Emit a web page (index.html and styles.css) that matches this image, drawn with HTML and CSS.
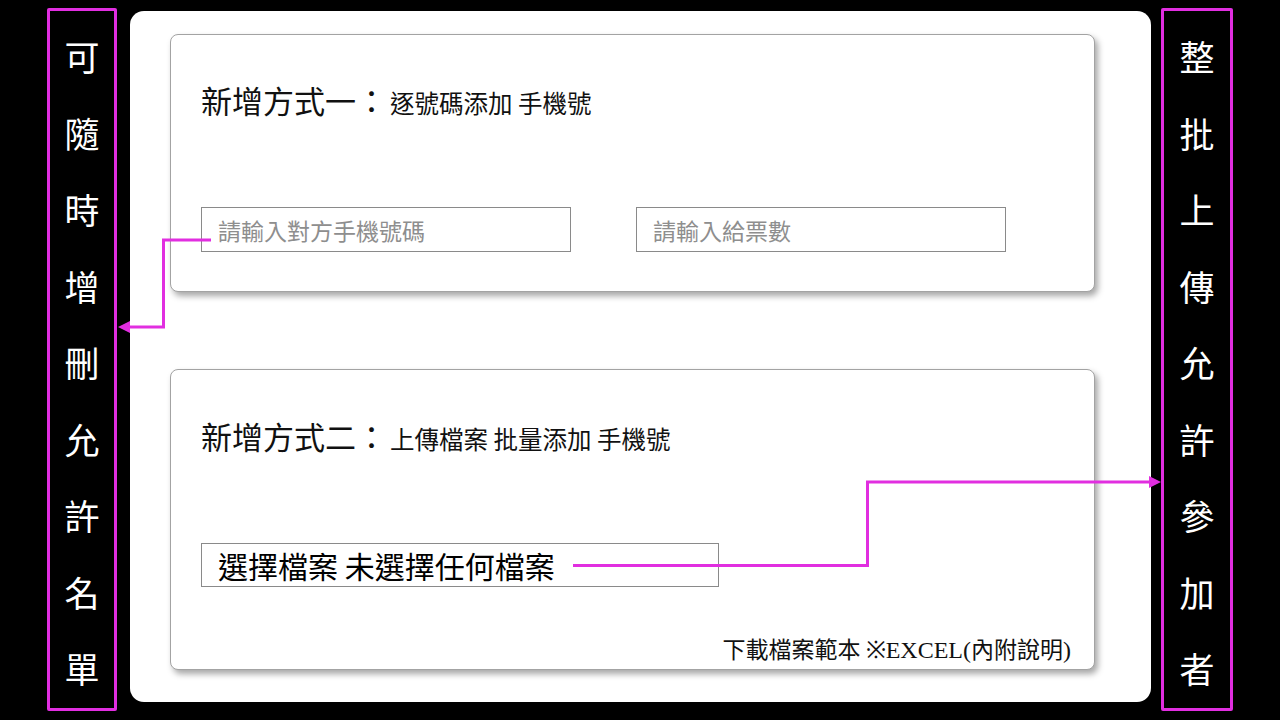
FILE: index.html
```html
<!DOCTYPE html>
<html lang="zh-Hant">
<head>
<meta charset="utf-8">
<title>新增方式</title>
<link rel="stylesheet" href="styles.css">
</head>
<body>
<div class="page">
  <div class="side">
    <span>可</span><span>隨</span><span>時</span><span>增</span><span>刪</span><span>允</span><span>許</span><span>名</span><span>單</span>
  </div>
  <div class="panel">
    <div class="card card-one">
      <div class="title"><span class="big">新增方式一：</span><span class="small">逐號碼添加 手機號</span></div>
      <div class="inputs">
        <div class="field">請輸入對方手機號碼</div>
        <div class="field">請輸入給票數</div>
      </div>
    </div>
    <div class="card card-two">
      <div class="title"><span class="big">新增方式二：</span><span class="small">上傳檔案 批量添加 手機號</span></div>
      <div class="file">選擇檔案 未選擇任何檔案</div>
      <div class="download">下載檔案範本 <span class="serif">※EXCEL(</span>內附說明<span class="serif">)</span></div>
    </div>
  </div>
  <div class="side">
    <span>整</span><span>批</span><span>上</span><span>傳</span><span>允</span><span>許</span><span>參</span><span>加</span><span>者</span>
  </div>
  <svg class="arrows" width="1280" height="720" viewBox="0 0 1280 720">
    <polyline points="211,240 163.5,240 163.5,327 128,327" fill="none" stroke="#e12ee0" stroke-width="3"/>
    <polygon points="118,327 130,321 130,333" fill="#e12ee0"/>
    <polyline points="573,565.5 867.5,565.5 867.5,482 1150,482" fill="none" stroke="#e12ee0" stroke-width="3"/>
    <polygon points="1161,482 1149,476 1149,488" fill="#e12ee0"/>
  </svg>
</div>
</body>
</html>
```

FILE: styles.css
```css
html, body {
  margin: 0;
  padding: 0;
  background: #000;
}
body {
  font-family: "Noto Sans CJK TC", "Noto Sans", sans-serif;
}
.page {
  position: relative;
  width: 1280px;
  height: 720px;
  display: flex;
  align-items: flex-start;
  padding: 8px 0 0 47px;
  box-sizing: border-box;
  overflow: hidden;
}
.side {
  width: 70px;
  height: 703px;
  box-sizing: border-box;
  border: 3px solid #e12ee0;
  border-radius: 2px;
  display: flex;
  flex-direction: column;
  align-items: center;
  justify-content: space-between;
  padding: 24px 0 19px;
  color: #fff;
  font-size: 35px;
  font-weight: 400;
  line-height: 42px;
}
.side:last-of-type {
  width: 72px;
}
.panel {
  margin: 3px 10px 0 13px;
  width: 1021px;
  height: 691px;
  box-sizing: border-box;
  background: #fff;
  border-radius: 14px;
  padding: 23px 56px 0 40px;
  display: flex;
  flex-direction: column;
}
.card {
  box-sizing: border-box;
  width: 925px;
  border: 1px solid #a3a3a3;
  border-radius: 8px;
  box-shadow: 3px 4px 6px rgba(0, 0, 0, 0.35);
  padding: 0 23px 0 30px;
  background: #fff;
}
.card-one {
  height: 258px;
  padding-top: 45px;
}
.card-two {
  height: 301px;
  margin-top: 77px;
  padding-top: 46px;
  display: flex;
  flex-direction: column;
}
.title {
  height: 40px;
  line-height: 40px;
  color: #111;
  white-space: nowrap;
}
.title .big {
  font-size: 31px;
}
.title .small {
  font-size: 24.5px;
  margin-left: 3px;
}
.inputs {
  margin-top: 87px;
  display: flex;
  gap: 65px;
}
.field {
  width: 370px;
  height: 45px;
  box-sizing: border-box;
  border: 1.5px solid #8a8a8a;
  padding-left: 16px;
  font-size: 23px;
  line-height: 44px;
  color: #8e8e8e;
  white-space: nowrap;
}
.file {
  margin-top: 87px;
  width: 518px;
  height: 44px;
  box-sizing: border-box;
  border: 1.5px solid #8a8a8a;
  padding-left: 16px;
  font-size: 30px;
  line-height: 42px;
  color: #000;
  white-space: nowrap;
}
.download {
  margin-top: auto;
  margin-bottom: 1px;
  align-self: flex-end;
  font-size: 23px;
  line-height: 36px;
  color: #111;
  white-space: nowrap;
}
.download .serif {
  font-family: "Liberation Serif", serif;
  font-size: 24px;
}
.arrows {
  position: absolute;
  left: 0;
  top: 0;
  pointer-events: none;
}
```
